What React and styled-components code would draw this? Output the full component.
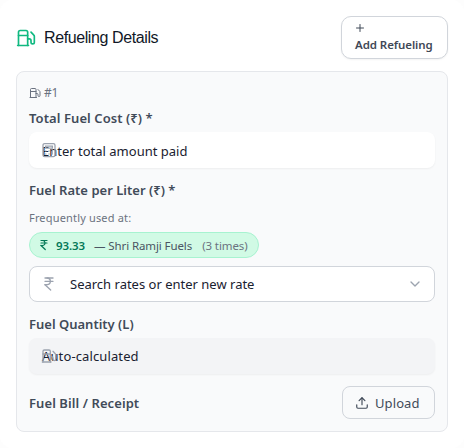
import React from "react";
import styled, { createGlobalStyle } from "styled-components";
import { Fuel, Plus, IndianRupee, ChevronDown, Upload } from "lucide-react";

const GlobalStyle = createGlobalStyle`
  * { box-sizing: border-box; }
  body { margin: 0; background: #fdfdfd; font-family: "Noto Sans", "Open Sans", sans-serif; }
`;

const Card = styled.main`
  width: 464px;
  height: 448px;
  padding: 16px;
  background: #fff;
  border-radius: 12px;
`;

const Header = styled.header`
  display: flex;
  align-items: center;
  justify-content: space-between;
  height: 43px;
  margin-bottom: 12px;
`;

const Title = styled.h2`
  display: flex;
  align-items: center;
  gap: 8px;
  margin: 0;
  font: 400 16px/24px "Liberation Sans", Arial, sans-serif;
  letter-spacing: -0.4px;
  color: #111827;
  svg { color: #10b981; }
`;

const AddButton = styled.button`
  display: flex;
  flex-direction: column;
  align-items: flex-start;
  width: 107px;
  height: 43px;
  padding: 5px 0 0 13px;
  border: 1px solid #d1d5db;
  border-radius: 10px;
  background: #fff;
  box-shadow: 0 1px 2px rgba(0, 0, 0, 0.05);
  color: #3f4856;
  font: 600 11.5px/16px "Noto Sans", sans-serif;
  letter-spacing: -0.07px;
  white-space: nowrap;
  svg { margin: 0 0 3px -1px; }
`;

const Panel = styled.section`
  display: flex;
  flex-direction: column;
  height: 361px;
  padding: 12px;
  border: 1px solid #e5e7eb;
  border-radius: 8px;
  background: #f9fafb;
`;

const EntryTag = styled.div`
  display: flex;
  align-items: center;
  gap: 3px;
  height: 16px;
  padding-top: 1px;
  font-size: 12px;
  line-height: 16px;
  letter-spacing: -0.3px;
  color: #6b7280;
`;

const Label = styled.label`
  display: block;
  height: 20px;
  margin-top: ${(p) => p.$top || 0}px;
  font-size: 13px;
  line-height: 20px;
  font-weight: 600;
  letter-spacing: ${(p) => p.$track || 0}px;
  color: #414b59;
  white-space: nowrap;
`;

const Field = styled.div`
  position: relative;
  display: flex;
  align-items: center;
  height: 36px;
  margin-top: ${(p) => p.$top}px;
  padding-top: ${(p) => p.$drop || 0}px;
  padding-left: ${(p) => p.$inset || 12}px;
  border: 1px solid ${(p) => p.$border || "transparent"};
  border-radius: 8px;
  background: ${(p) => p.$fill || "#fff"};
  box-shadow: ${(p) => (p.$border ? "none" : "0 1px 2px rgba(0, 0, 0, 0.05)")};
  font-size: 13px;
  letter-spacing: ${(p) => p.$track || 0}px;
  color: #1a2130;
  white-space: nowrap;
`;

const FieldIcon = styled.span`
  position: absolute;
  left: 11px;
  top: 50%;
  display: flex;
  transform: translateY(-50%);
  color: #9ca3af;
`;

const Chevron = styled(ChevronDown)`
  margin: 0 11px 0 auto;
  color: #9ca3af;
`;

const Hint = styled.div`
  height: 16px;
  margin-top: 10px;
  font-size: 11px;
  line-height: 16px;
  letter-spacing: 0.17px;
  color: #6b7280;
`;

const RateChip = styled.button`
  display: flex;
  align-items: center;
  align-self: flex-start;
  width: 230px;
  height: 26px;
  margin-top: 6px;
  padding: 1px 0 0 8px;
  border: 1px solid #a7f3d0;
  border-radius: 13px;
  background: #d1fae5;
  font: 400 11.5px/16px "Noto Sans", sans-serif;
  letter-spacing: -0.1px;
  color: #4b5563;
  white-space: nowrap;
  svg { margin-top: -2px; color: #047857; }
`;

const Rate = styled.span`
  margin: 0 9px 0 6px;
  font-weight: 600;
  letter-spacing: -0.1px;
  color: #047857;
`;

const Times = styled.span`
  margin-left: 10px;
  color: #6b7280;
`;

const ReceiptRow = styled.div`
  display: flex;
  align-items: center;
  justify-content: space-between;
  height: 33px;
  margin-top: 12px;
`;

const UploadButton = styled.button`
  display: flex;
  align-items: center;
  gap: 6px;
  width: 93px;
  height: 33px;
  padding: 0 0 0 12px;
  border: 1px solid #d1d5db;
  border-radius: 8px;
  background: #f9fafb;
  color: #414b59;
  font: 400 13px/20px "Noto Sans", sans-serif;
  letter-spacing: 0.1px;
`;

function CalculatorIcon() {
  return (
    <svg width="16" height="16" viewBox="0 0 16 16" fill="none" stroke="currentColor" strokeWidth="1.3" strokeLinecap="round">
      <rect x="2" y="1.6" width="12" height="13" rx="1.6" />
      <path d="M4.6 4.2h6.8v2H4.6zM4.8 9h.1M8 9h.1M11.2 9h.1M4.8 12h.1M8 12h.1M11.2 9v3" />
    </svg>
  );
}

export default function App() {
  return (
    <>
      <GlobalStyle />
      <Card>
        <Header>
          <Title><Fuel size={20} />Refueling Details</Title>
          <AddButton><Plus size={12} />Add Refueling</AddButton>
        </Header>
        <Panel>
          <EntryTag><Fuel size={12} />#1</EntryTag>
          <Label $top={8} $track={0.08}>Total Fuel Cost (₹) *</Label>
          <Field $top={4} $drop={2}>
            Enter total amount paid
            <FieldIcon><CalculatorIcon /></FieldIcon>
          </Field>
          <Label $top={12} $track={0.02}>Fuel Rate per Liter (₹) *</Label>
          <Hint>Frequently used at:</Hint>
          <RateChip>
            <IndianRupee size={12} strokeWidth={2.4} />
            <Rate>93.33</Rate>
            — Shri Ramji Fuels
            <Times>(3 times)</Times>
          </RateChip>
          <Field $top={8} $inset={40} $border="#d1d5db">
            Search rates or enter new rate
            <FieldIcon><IndianRupee size={16} /></FieldIcon>
            <Chevron size={16} />
          </Field>
          <Label $top={12}>Fuel Quantity (L)</Label>
          <Field $top={4} $fill="#f3f4f6" $track={0.12}>
            Auto-calculated
            <FieldIcon><Fuel size={16} /></FieldIcon>
          </Field>
          <ReceiptRow>
            <Label as="span" $track={0.08}>Fuel Bill / Receipt</Label>
            <UploadButton><Upload size={14} />Upload</UploadButton>
          </ReceiptRow>
        </Panel>
      </Card>
    </>
  );
}
